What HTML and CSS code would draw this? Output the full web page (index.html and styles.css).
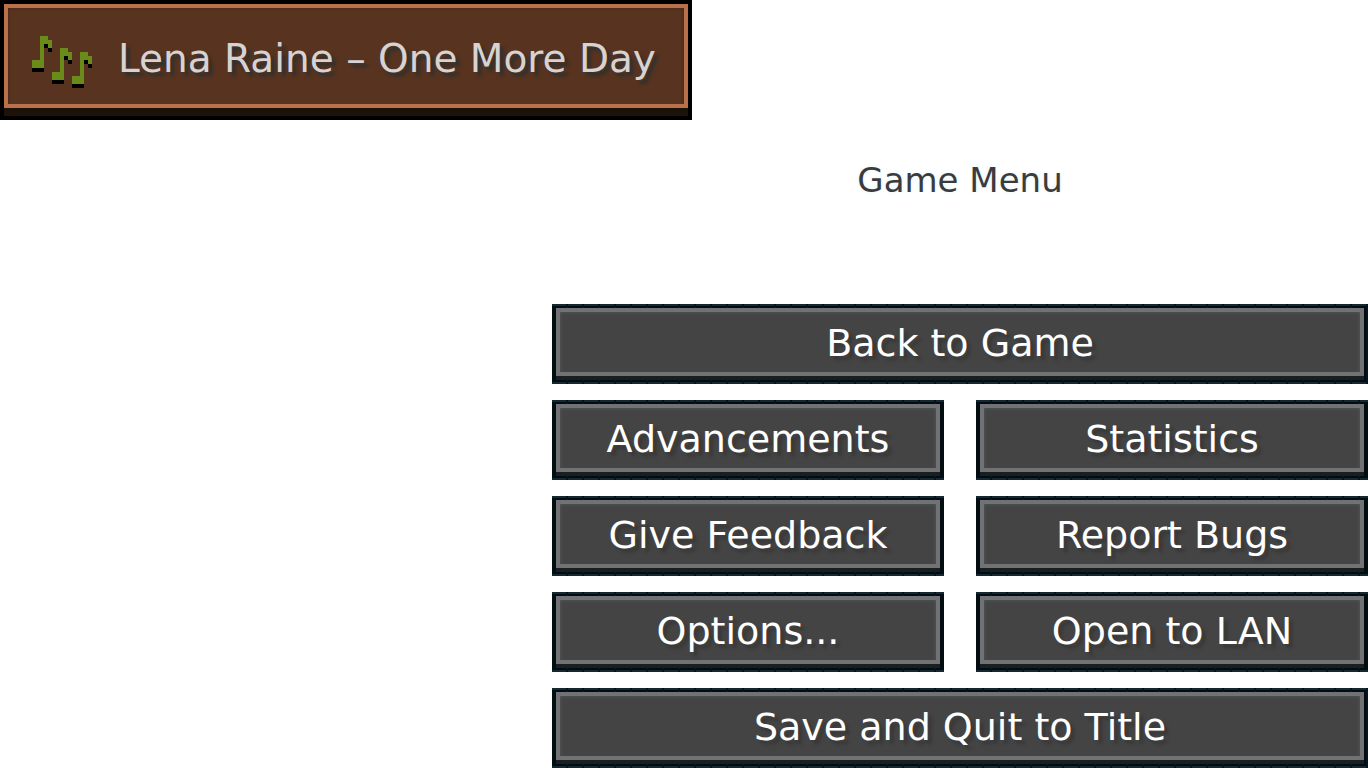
FILE: index.html
```html
<!DOCTYPE html>
<html lang="en">
<head>
<meta charset="utf-8">
<meta name="viewport" content="width=device-width, initial-scale=1">
<title>Game Menu</title>
<link rel="stylesheet" href="styles.css">
</head>
<body>
<aside class="toast" aria-label="Now playing">
  <svg class="notes" viewBox="0 0 15 13" shape-rendering="crispEdges" aria-hidden="true">
    <defs>
      <g id="note">
        <path fill="#698b19" d="M2 0h2v1h1v2h-1v-1h-1v6h-3v-2h2z"/>
        <path fill="#000" d="M3 2h1v1h1v1h-1v-1h-1zM0 8h3v1h-3z"/>
      </g>
    </defs>
    <use href="#note"/>
    <use href="#note" x="5" y="3"/>
    <use href="#note" x="10" y="4"/>
  </svg>
  <span class="track">Lena Raine – One More Day</span>
</aside>
<main class="menu">
  <h1 class="title">Game Menu</h1>
  <div class="actions">
    <button class="action wide" type="button">Back to Game</button>
    <button class="action" type="button">Advancements</button>
    <button class="action" type="button">Statistics</button>
    <button class="action" type="button">Give Feedback</button>
    <button class="action" type="button">Report Bugs</button>
    <button class="action" type="button">Options...</button>
    <button class="action" type="button">Open to LAN</button>
    <button class="action wide" type="button">Save and Quit to Title</button>
  </div>
</main>
</body>
</html>
```
FILE: styles.css
```css
* { box-sizing: border-box; }
body {
  margin: 0;
  background: #fff;
  font-family: "DejaVu Sans", sans-serif;
  font-size: 38px;
  line-height: 40px;
}
.toast {
  display: flex;
  align-items: center;
  gap: 26px;
  width: fit-content;
  min-height: 120px;
  padding: 4px 32px 6px 28px;
  border: 4px solid #000;
  background: #58331f;
  box-shadow: inset 0 -8px #1d1209, inset 0 -12px #b9714b, inset 0 0 0 4px #b9714b, inset 0 0 3px 4px #3d2414;
}
.notes {
  width: 60px;
  height: 52px;
  margin-top: 6px;
}
.track {
  color: #d6d3d2;
  font-size: 39px;
  text-shadow: 4px 4px 3px #303130;
}
.menu {
  max-width: 816px;
  margin-left: auto;
}
.title {
  margin: 0;
  padding: 40px 0 104px;
  color: #3b3b3d;
  font-size: 34px;
  font-weight: 400;
  text-align: center;
  text-shadow: 0 0 4px #e4f6fa;
}
.actions {
  display: grid;
  grid-template-columns: 1fr 1fr;
  gap: 16px 32px;
}
.action {
  min-height: 80px;
  padding: 0 12px 2px;
  border: 4px solid transparent;
  background:
    linear-gradient(#444, #444) padding-box,
    repeating-linear-gradient(90deg, transparent 0 14px, #06131a 14px 16px) border-box,
    linear-gradient(#142832 0 2px, #030c11 2px 78px, #142832 78px) border-box;
  box-shadow: inset 0 -4px #191e20, inset 0 -8px #707274, inset 0 0 0 4px #707274, inset 0 0 4px 4px #55585a;
  color: #fff;
  font: inherit;
  text-shadow: 4px 4px 3px #383838;
}
.action:hover { color: #ffffa0; }
.wide { grid-column: 1 / -1; }
```
